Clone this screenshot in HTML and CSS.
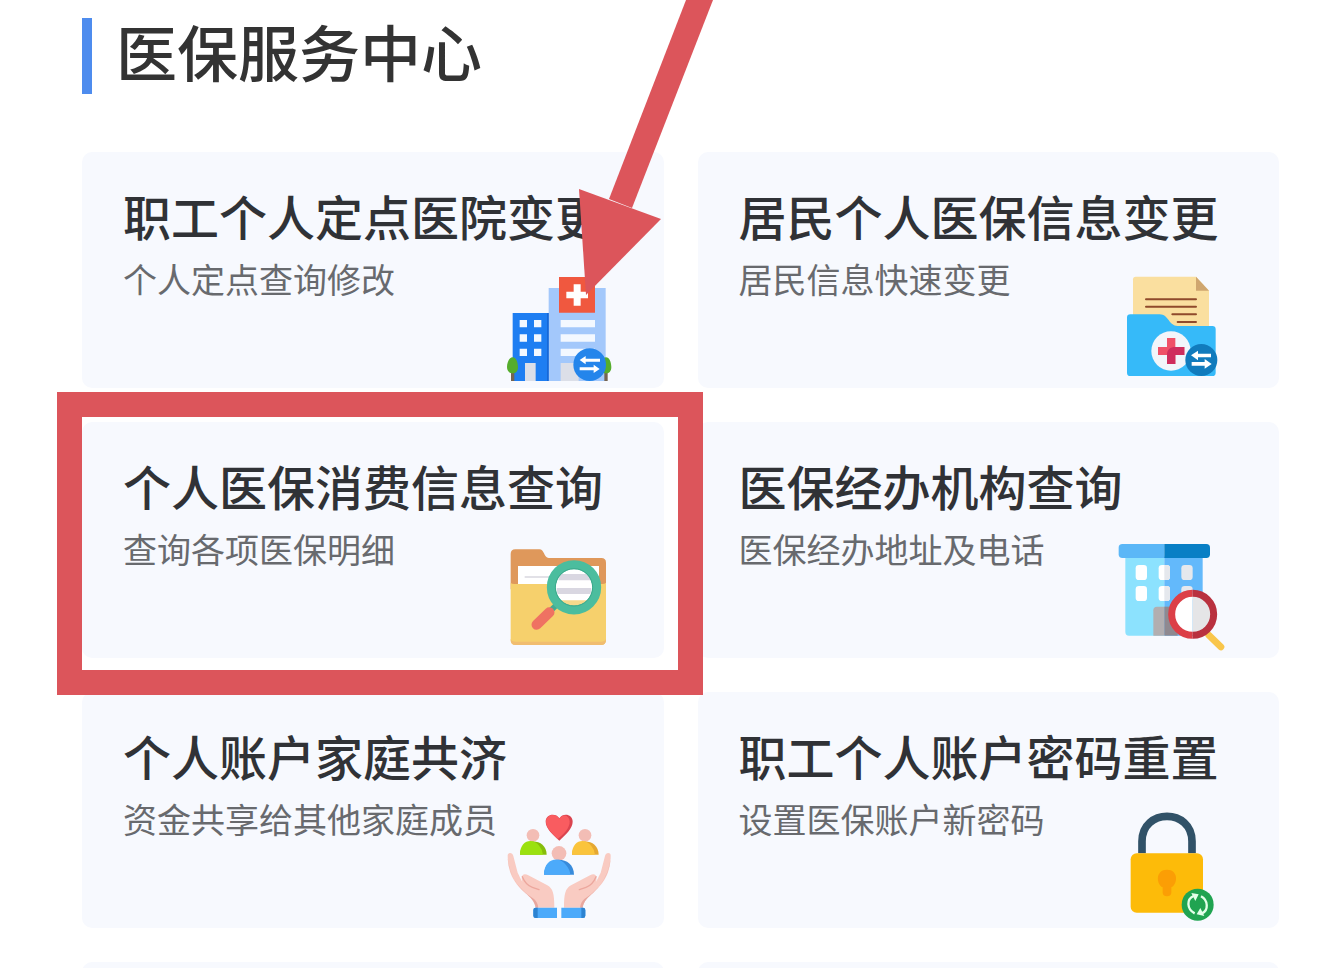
FILE: index.html
```
<!DOCTYPE html>
<html lang="zh-CN">
<head>
  <meta charset="UTF-8">
  <meta name="viewport" content="width=device-width, initial-scale=1.0">
  <title>医保服务中心</title>
  <link rel="stylesheet" href="styles.css">
</head>
<body>
<main class="page">
  <h1 class="page-title">医保服务中心</h1>

  <div class="cards">
    <a class="card" href="#hospital">
      <h2>职工个人定点医院变更</h2>
      <div class="card-row">
        <p>个人定点查询修改</p>
        <svg class="icon" viewBox="36 0 360 384" aria-hidden="true">
          <path fill="#a3c8fb" d="M176 84h171v279H176z"/>
          <path fill="#1e7ef2" d="M68 159h108v204H68z"/>
          <path fill="#1767d6" d="M171 159h5v204h-5z"/>
          <path fill="#f0583f" d="M207 51h108v107H207z"/>
          <path fill="#fff" d="M251 73h21v22h22v20h-22v22h-21v-22h-22V95h22z"/>
          <path fill="#f3f8ff" d="M89 180h22v22H89zM132 180h22v22h-22zM89 223h22v22H89zM132 223h22v22h-22zM89 266h22v22H89zM132 266h22v22h-22zM212 180h103v22H212zM212 223h103v22H212zM212 266h103v22H212z"/>
          <path fill="#dcdfe8" d="M105 309h32v54h-32zM212 309h54v54h-54z"/>
          <path fill="#756452" d="M63 330h10v33H63zM343 330h10v33h-10z"/>
          <path fill="#55ad2d" d="M68 292c-10 0-17 15-17 29 0 12 7 19 17 19s16-7 16-19c0-14-6-29-16-29zM348 292c-10 0-17 15-17 29 0 12 7 19 17 19s16-7 16-19c0-14-6-29-16-29z"/>
          <circle cx="299" cy="314" r="49" fill="#2485eb"/>
          <path fill="#fff" d="M269 300l18-12v8h43v9h-43v8zM329 327l-18 12v-8h-42v-9h42v-8z"/>
        </svg>
      </div>
      <svg class="arrow" viewBox="0 0 140 295" aria-hidden="true">
        <path d="M113 0h27L59 208l-23-9z"/>
        <path d="M6 189l82 30-75 76z"/>
      </svg>
    </a>

    <a class="card" href="#resident">
      <h2>居民个人医保信息变更</h2>
      <div class="card-row">
        <p>居民信息快速变更</p>
        <svg class="icon" viewBox="24 0 360 384" aria-hidden="true">
          <path fill="#fadf9f" d="M80 50h181l39 42v120H72V58q0-8 8-8z"/>
          <path fill="#cfa66f" d="M261 50l39 42h-39z"/>
          <path stroke="#8f4a2b" stroke-width="6" stroke-linecap="round" d="M111 118h150M111 140h150M190 163h71M206 186h55"/>
          <path fill="#36baf9" d="M64 163h88c27 0 27 35 54 35h104q10 0 10 10v130q0 10-10 10H64q-10 0-10-10V173q0-10 10-10z"/>
          <circle cx="186" cy="273" r="59" fill="#f2f5fa"/>
          <path fill="#ef5067" d="M174 234h25v27h27v24h-27v27h-25v-27h-27v-24h27z"/>
          <path fill="#cf2d5d" d="M226 261v24h-27v27h-25v-27c0-16 9-24 25-24z"/>
          <circle cx="277" cy="300" r="48" fill="#117bbd"/>
          <path fill="#fff" d="M246 286l21-14v9h39v11h-39v9zM308 312l-21 14v-9h-39v-11h39v-9z"/>
        </svg>
      </div>
    </a>

    <a class="card" href="#expense">
      <h2>个人医保消费信息查询</h2>
      <div class="card-row">
        <p>查询各项医保明细</p>
        <svg class="icon" viewBox="36 0 360 384" aria-hidden="true">
          <path fill="#df985b" d="M76 58h72c15 0 14 26 28 26h158q14 0 14 14v80H62V72q0-14 14-14z"/>
          <path fill="#fff" d="M84 108h243v70H84z"/>
          <path stroke="#dddbe3" stroke-width="5" d="M104 141h90"/>
          <path fill="#f6d06c" d="M62 158q2 4 12 4h262q9 0 12-4v172q0 15-15 15H77q-15 0-15-15z"/>
          <path fill="#f1bd70" d="M62 327v3q0 15 15 15h256q15 0 15-15v-3q-3 8-15 8H77q-12 0-15-8z"/>
          <path stroke="#43aa91" stroke-width="17" d="M181 243l22-22"/>
          <path stroke="#ef7262" stroke-width="31" stroke-linecap="round" d="M140 284l38-37"/>
          <circle cx="252" cy="172" r="66" fill="#fff"/>
          <path fill="#d9d7e1" d="M210 132h84l10 19h-99zM200 174h104l-2 18h-100z"/>
          <path fill="#f6d98c" d="M207 211h90q-15 25-45 25t-45-25z"/>
          <circle cx="252" cy="172" r="68" fill="none" stroke="#4bbd9e" stroke-width="27"/>
          <circle cx="252" cy="172" r="56" fill="none" stroke="#3ca98c" stroke-width="3"/>
        </svg>
      </div>
      <span class="highlight"></span>
    </a>

    <a class="card" href="#agency">
      <h2>医保经办机构查询</h2>
      <div class="card-row">
        <p>医保经办地址及电话</p>
        <svg class="icon" viewBox="54 0 360 384" aria-hidden="true">
          <path fill="#8ce2fe" d="M79 80h117v237H90q-11 0-11-11z"/>
          <path fill="#63b9fb" d="M196 80h115v226q0 11-11 11H196z"/>
          <path fill="#5bb7f7" d="M70 42h126v42H70q-11 0-11-11V53q0-11 11-11z"/>
          <path fill="#087fc5" d="M196 42h126q11 0 11 11v20q0 11-11 11H196z"/>
          <g fill="#fff">
            <rect x="110" y="105" width="34" height="45" rx="10"/>
            <rect x="110" y="168" width="34" height="45" rx="10"/>
            <rect x="179" y="105" width="34" height="45" rx="10"/>
            <rect x="179" y="168" width="34" height="45" rx="10"/>
          </g>
          <path fill="#e5e8ed" d="M196 105h7q10 0 10 10v25q0 10-10 10h-7zM196 168h7q10 0 10 10v25q0 10-10 10h-7z"/>
          <rect x="247" y="105" width="34" height="45" rx="10" fill="#e5e8ed"/>
          <rect x="247" y="168" width="34" height="45" rx="10" fill="#e5e8ed"/>
          <path fill="#b2aeb0" d="M174 230h22v87h-33v-76q0-11 11-11z"/>
          <path fill="#8f8990" d="M196 230h40v87h-40z"/>
          <path stroke="#f9c64b" stroke-width="20" stroke-linecap="round" d="M329 315l37 36"/>
          <path fill="#fff" d="M281 191a62 62 0 0 0 0 124z"/>
          <path fill="#e5e5e7" d="M281 191a62 62 0 0 1 0 124z"/>
          <path fill="none" stroke="#dc3f47" stroke-width="21" d="M281 190a63 63 0 0 0 0 126"/>
          <path fill="none" stroke="#b9313f" stroke-width="21" d="M281 190a63 63 0 0 1 0 126"/>
        </svg>
      </div>
    </a>

    <a class="card" href="#family">
      <h2>个人账户家庭共济</h2>
      <div class="card-row">
        <p>资金共享给其他家庭成员</p>
        <svg class="icon" viewBox="36 0 360 384" aria-hidden="true">
          <path fill="#da444f" d="M208 122c-18-18-41-36-41-57 0-22 29-28 41-10 12-18 40-12 40 10 0 21-22 39-40 57z"/>
          <path fill="#f95c60" d="M203 117c-16-17-35-33-35-52 0-21 28-27 40-9 11-15 29-11 31 8 1 20-17 38-36 53z"/>
          <g fill="#f3bdb5">
            <circle cx="129" cy="106" r="19"/>
            <circle cx="285" cy="106" r="19"/>
            <circle cx="207" cy="160" r="22"/>
          </g>
          <path fill="#86bd0b" d="M90 164c0-53 80-53 80 0z"/>
          <path fill="#9be110" d="M90 164c0-45 40-51 58-26q10 12 11 26z"/>
          <path fill="#e5a832" d="M246 164c0-53 80-53 80 0z"/>
          <path fill="#fac43c" d="M246 164c0-45 40-51 58-26q10 12 11 26z"/>
          <path fill="#388bdb" d="M162 224c0-60 90-60 90 0z"/>
          <path fill="#4caafa" d="M162 224c0-51 48-57 66-29q12 14 13 29z"/>
          <path fill="#f9cbc2" d="M53 166c0-10 15-10 17 2l13 50c6 10 8 18 14 27-6-19 4-28 18-19l57 30c17 10 21 25 21 67h-56c-3-20-16-31-31-44-29-26-53-55-53-113z"/>
          <path fill="#e8a79e" d="M53 165c0 62 37 106 79 132q11 9 13 26h-8c-3-20-16-31-31-44-38-34-53-80-53-114z"/>
          <path fill="none" stroke="#eca79d" stroke-width="4" stroke-linecap="round" d="M97 230c6 15 14 26 30 32l20 7"/>
          <path fill="#f9cbc2" d="M362 166c0-10-15-10-17 2l-13 50c-6 10-8 18-14 27 6-19-4-28-18-19l-57 30c-17 10-21 25-21 67h56c3-20 16-31 31-44 29-26 53-55 53-113z"/>
          <path fill="#e8a79e" d="M362 165c0 62-37 106-79 132q-11 9-13 26h8c3-20 16-31 31-44 38-34 53-80 53-114z"/>
          <path fill="none" stroke="#eca79d" stroke-width="4" stroke-linecap="round" d="M318 230c-6 15-14 26-30 32l-20 7"/>
          <path fill="#4caafa" d="M137 323h64v31h-64q-7 0-7-7v-17q0-7 7-7zM214 323h65q7 0 7 7v17q0 7-7 7h-65z"/>
          <path fill="#2d83d1" d="M137 323h6v31h-6q-7 0-7-7v-17q0-7 7-7zM274 323h5q7 0 7 7v17q0 7-7 7h-5z"/>
        </svg>
      </div>
    </a>

    <a class="card" href="#password">
      <h2>职工个人账户密码重置</h2>
      <div class="card-row">
        <p>设置医保账户新密码</p>
        <svg class="icon" viewBox="24 0 360 384" aria-hidden="true">
          <path fill="none" stroke="#315268" stroke-width="23" d="M99 160v-36c0-100 150-100 150 0v36"/>
          <rect x="65" y="160" width="217" height="178" rx="18" fill="#fdbb09"/>
          <path fill="#fb9e05" d="M174 209c-35 0-33 43-13 53v16c0 14 26 14 26 0v-16c20-10 22-53-13-53z"/>
          <circle cx="266" cy="314" r="48" fill="#20a451"/>
          <path fill="none" stroke="#e3ffe9" stroke-width="7" d="M257 340c-24-12-25-43-3-52M276 289c22 12 23 42 3 51"/>
          <path fill="#e3ffe9" d="M247 279l22 4-10 20zM286 348l-23-5 11-19z"/>
        </svg>
      </div>
    </a>

    <div class="card card-blank"></div>
    <div class="card card-blank"></div>
  </div>
</main>
</body>
</html>
```
FILE: styles.css
```
* {
  box-sizing: border-box;
}
body {
  margin: 0;
  background: #fff;
  color: #303236;
  font-family: "Noto Sans CJK SC", sans-serif;
}
h1, h2, p {
  margin: 0;
  font-weight: 500;
  white-space: nowrap;
}
.page {
  height: 100vh;
  overflow: hidden;
  padding: 18px 59px 0 82px;
}
.page-title {
  margin-bottom: 58px;
  padding: 0 0 10px 24px;
  border-left: 10px solid #4e8cee;
  color: #333;
  font-size: 61px;
  line-height: 66px;
}
.cards {
  display: grid;
  grid-template-columns: 1fr 1fr;
  gap: 34px;
}
.card {
  position: relative;
  padding: 34px 42px 0 41px;
  border-radius: 10px;
  background: #f7f9fe;
  color: inherit;
  text-decoration: none;
}
.card h2 {
  font-size: 48px;
  line-height: 58px;
}
.card-row {
  display: flex;
  justify-content: space-between;
  margin-top: 16px;
}
.card p {
  color: #686a6e;
  font-size: 34px;
  font-weight: 400;
  line-height: 38px;
}
.card-blank {
  min-height: 236px;
}
.icon {
  display: block;
  flex: none;
  width: 120px;
  height: 128px;
}

/* red marks over the cards */
.arrow {
  position: absolute;
  z-index: 2;
  top: -152px;
  right: -49px;
  width: 140px;
  height: 295px;
  fill: #dc555b;
}
.highlight {
  position: absolute;
  z-index: 1;
  top: -30px;
  right: -39px;
  bottom: -37px;
  left: -25px;
  border: 25px solid #dc555b;
}
```
